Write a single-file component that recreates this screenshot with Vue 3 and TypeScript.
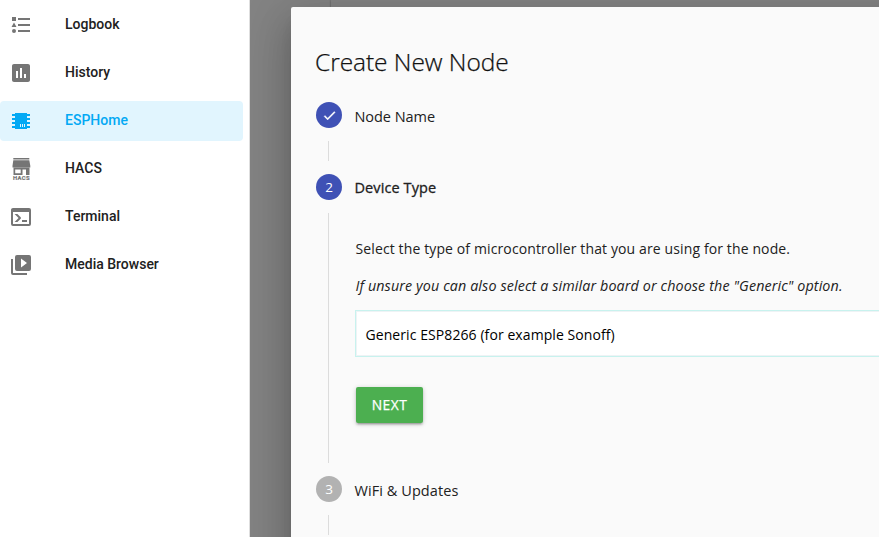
<script setup lang="ts">
interface NavItem {
  label: string
  icon: string
  active?: boolean
}

const navItems: NavItem[] = [
  { label: 'Logbook', icon: 'M5 9.5L7.5 14H2.500L5 9.500M3 4H7V8H3V4M5 20A2 2 0 0 0 7 18A2 2 0 0 0 5 16A2 2 0 0 0 3 18A2 2 0 0 0 5 20M9 5V7H21V5H9M9 19H21V17H9V19M9 13H21V11H9V13Z' },
  { label: 'History', icon: 'M17 17H15V13H17M13 17H11V7H13M9 17H7V10H9M19 3H5C3.900 3 3 3.900 3 5V19C3 20.100 3.900 21 5 21H19C20.100 21 21 20.100 21 19V5C21 3.900 20.100 3 19 3Z' },
  { label: 'ESPHome', icon: 'M6 4H18V5H21V7H18V9H21V11H18V13H21V15H18V17H21V19H18V20H6V19H3V17H6V15H3V13H6V11H3V9H6V7H3V5H6V4M11 15V18H12V15H11M13 15V18H14V15H13M15 15V18H16V15H15Z', active: true },
  { label: 'HACS', icon: 'hacs' },
  { label: 'Terminal', icon: 'M20 19V7H4V19H20M20 3A2 2 0 0 1 22 5V19A2 2 0 0 1 20 21H4A2 2 0 0 1 2 19V5C2 3.890 2.900 3 4 3H20M13 17V15H18V17H13M9.580 13L5.570 9H8.400L11.700 12.300C12.090 12.690 12.090 13.330 11.700 13.720L8.420 17H5.590L9.580 13Z' },
  { label: 'Media Browser', icon: 'M4 6H2V20A2 2 0 0 0 4 22H18V20H4V6M20 2H8A2 2 0 0 0 6 4V16A2 2 0 0 0 8 18H20A2 2 0 0 0 22 16V4A2 2 0 0 0 20 2M12 14.500V5.500L18 10L12 14.500Z' },
]
</script>

<template>
  <div class="app">
    <nav class="sidebar">
      <a v-for="item in navItems" :key="item.label" class="nav-item" :class="{ active: item.active }">
        <svg v-if="item.icon === 'hacs'" class="nav-icon" viewBox="0 0 24 24">
          <path d="M4.300 1H20.300V2.600H4.300ZM4.300 3.300H20.300L21.300 8.800V10.500H3.500V8.800Z" />
          <path d="M4.500 10.500H20.500V18H17V12.500H13.500V18H4.500ZM6.200 12.500V16.300H11.700V12.500Z" fill-rule="evenodd" />
          <text x="12.500" y="23.300" text-anchor="middle">HACS</text>
        </svg>
        <svg v-else class="nav-icon" viewBox="0 0 24 24"><path :d="item.icon" fill-rule="evenodd" /></svg>
        <span class="nav-label">{{ item.label }}</span>
      </a>
    </nav>
    <div class="backdrop">
      <div class="page-edge"></div>
      <main class="dialog">
        <h1>Create New Node</h1>
        <section class="step done">
          <header>
            <span class="badge">
              <svg viewBox="0 0 24 24"><path d="M9 16.200L4.800 12l-1.400 1.400L9 19 21 7l-1.400-1.400L9 16.200z" /></svg>
            </span>
            <span class="step-title">Node Name</span>
          </header>
          <div class="step-body"></div>
        </section>
        <section class="step current">
          <header>
            <span class="badge">2</span>
            <span class="step-title">Device Type</span>
          </header>
          <div class="step-body content">
            <p class="intro">Select the type of microcontroller that you are using for the node.</p>
            <p class="hint">If unsure you can also select a similar board or choose the "Generic" option.</p>
            <div class="select">Generic ESP8266 (for example Sonoff)</div>
            <button type="button">NEXT</button>
          </div>
        </section>
        <section class="step pending">
          <header>
            <span class="badge">3</span>
            <span class="step-title">WiFi &amp; Updates</span>
          </header>
          <div class="step-body"></div>
        </section>
      </main>
    </div>
  </div>
</template>

<style>
body {
  margin: 0;
  overflow: hidden;
}
</style>

<style scoped>
.app {
  display: flex;
  width: 100vw;
  height: 100vh;
  overflow: hidden;
  font-family: "Open Sans", "Noto Sans", sans-serif;
}

.sidebar {
  box-sizing: border-box;
  flex: 0 0 250px;
  display: flex;
  flex-direction: column;
  gap: 8px;
  padding: 5px 6px 0 0;
  background: #fff;
  border-right: 1px solid #dedede;
}

.nav-item {
  display: flex;
  align-items: center;
  height: 40px;
  box-sizing: border-box;
  padding-left: 9px;
  color: #212121;
}

.nav-icon {
  width: 24px;
  height: 24px;
  fill: #757575;
  overflow: visible;
}

.nav-icon text {
  font: 700 5.8px Roboto, sans-serif;
  letter-spacing: 0.4px;
  stroke: #757575;
  stroke-width: 0.2px;
}

.nav-label {
  margin-left: 32px;
  padding-bottom: 2px;
  font: 500 14px/20px Roboto, sans-serif;
  letter-spacing: 0;
}

.active {
  background: #e1f5fe;
  color: #03a9f4;
  border-radius: 4px;
}

.active .nav-icon {
  fill: #03a9f4;
}

.backdrop {
  flex: 1;
  min-width: 0;
  box-sizing: border-box;
  position: relative;
  padding: 7px 0 0 41px;
  background: #838383;
  overflow: hidden;
}

.page-edge {
  position: absolute;
  top: 0;
  left: 81px;
  width: 100%;
  height: 10px;
  background: #838383;
  box-shadow: 0 0 2px rgba(0, 0, 0, 0.4);
}

.dialog {
  position: relative;
  box-sizing: border-box;
  width: 700px;
  height: 640px;
  padding: 36px 24px 0;
  background: #fafafa;
  border-radius: 2px 0 0 0;
  box-shadow: 0 24px 38px 3px rgba(0, 0, 0, 0.14), 0 9px 46px 8px rgba(0, 0, 0, 0.12), 0 11px 15px -7px rgba(0, 0, 0, 0.2);
  color: #212121;
}

h1 {
  margin: 0 0 22px;
  font-size: 24.5px;
  line-height: 37px;
  font-weight: 300;
  letter-spacing: -0.05px;
  color: #111;
  -webkit-text-stroke: 0.25px #111;
}

.step header {
  display: flex;
  align-items: center;
  gap: 12.500px;
  height: 26px;
  padding-left: 1px;
}

.badge {
  display: flex;
  align-items: center;
  justify-content: center;
  width: 26px;
  height: 26px;
  border-radius: 50%;
  background: #3f51b5;
  color: #fff;
  font-size: 13.5px;
  line-height: 26px;
}

.badge svg {
  width: 15px;
  height: 15px;
  fill: #fff;
  stroke: #fff;
  stroke-width: 0.6px;
}

.pending .badge {
  background: #b2b2b2;
}

.step-title {
  font-size: 14.5px;
  line-height: 20px;
  padding-top: 3px;
  letter-spacing: -0.05px;
}

.current .step-title {
  padding-top: 1px;
  letter-spacing: 0.1px;
  -webkit-text-stroke: 0.3px #212121;
}

.pending .step-title {
  letter-spacing: 0.07px;
}

.step-body {
  height: 20px;
  margin: 13px 0 13px 13px;
  border-left: 1px solid #dcdcdc;
}

.step-body.content {
  box-sizing: border-box;
  height: 250px;
  padding: 25px 0 0 26px;
}

p {
  margin: 0 0 15px;
  padding-left: 0.5px;
  font-size: 14px;
  line-height: 22px;
  letter-spacing: 0.12px;
  white-space: nowrap;
}

.hint {
  font-size: 14.3px;
  font-style: italic;
  letter-spacing: 0.12px;
  margin-bottom: 13px;
}

.select {
  box-sizing: border-box;
  height: 47px;
  width: 620px;
  padding: 0 9.500px;
  border: 1px solid #c8f2ee;
  box-shadow: inset 0 0 0 1px #eef3f5;
  background: #fff;
  color: #000;
  font-size: 14px;
  line-height: 47px;
  letter-spacing: 0.08px;
}

button {
  display: block;
  width: 67px;
  height: 36px;
  margin: 30px 0 0 1px;
  padding: 0;
  border: 0;
  border-radius: 2px;
  background: #4caf50;
  box-shadow: 0 2px 2px rgba(0, 0, 0, 0.14), 0 3px 1px -2px rgba(0, 0, 0, 0.12), 0 1px 5px rgba(0, 0, 0, 0.2);
  color: #fff;
  font: 400 13.8px/36px "Open Sans", "Noto Sans", sans-serif;
  letter-spacing: 0.5px;
  -webkit-text-stroke: 0.25px #fff;
}
</style>
